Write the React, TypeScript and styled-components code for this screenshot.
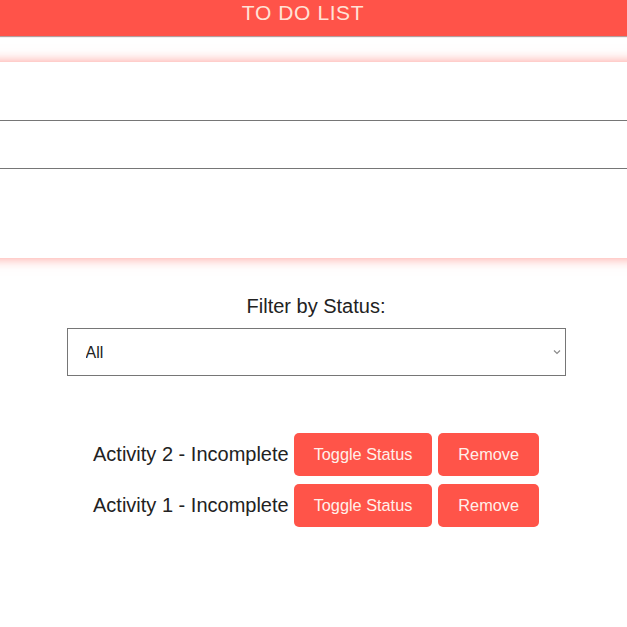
import React, { useState } from "react";
import styled, { createGlobalStyle } from "styled-components";

const GlobalStyle = createGlobalStyle`
  html, body {
    margin: 0;
    padding: 0;
    overflow-x: hidden;
    background: #ffffff;
  }
  body {
    font-family: "Liberation Sans", Arial, sans-serif;
    color: #222222;
  }
`;

const Page = styled.div`
  display: flex;
  flex-direction: column;
  width: 100%;
`;

const Header = styled.header`
  height: 36px;
  box-sizing: border-box;
  padding: 1px 21px 0 0;
  background: #ff5349;
  box-shadow: 0 1px 1px rgba(90, 40, 40, 0.45);
  text-align: center;
  position: relative;
  z-index: 1;
`;

const Title = styled.h1`
  margin: 0;
  font-size: 21px;
  line-height: 24px;
  font-weight: 400;
  color: #ffe2d6;
  letter-spacing: 0.6px;
`;

const FormCard = styled.form`
  margin: 26px -20px 0;
  height: 196px;
  box-sizing: border-box;
  padding-top: 58px;
  background: #ffffff;
  box-shadow: 0 0 12px rgba(255, 83, 73, 0.6);
`;

const TextField = styled.input`
  display: block;
  width: 100%;
  height: 49px;
  box-sizing: border-box;
  border: 1px solid #767676;
  background: #ffffff;
  font-family: "Liberation Sans", Arial, sans-serif;
  font-size: 16px;
  padding: 0 30px;
  outline: none;
`;

const Main = styled.main`
  display: flex;
  flex-direction: column;
  align-items: center;
  padding-left: 5px;
`;

const FilterLabel = styled.label`
  margin-top: 37px;
  font-size: 20px;
  line-height: 23px;
  color: #222222;
`;

const SelectWrap = styled.div`
  position: relative;
  margin-top: 10px;
  width: 499px;
`;

const Select = styled.select`
  display: block;
  width: 100%;
  height: 48px;
  box-sizing: border-box;
  appearance: none;
  -webkit-appearance: none;
  border: 1px solid #767676;
  border-radius: 0;
  background: #ffffff;
  padding: 0 18px;
  font-family: "Liberation Sans", Arial, sans-serif;
  font-size: 16px;
  color: #222222;
  outline: none;
`;

const Chevron = styled.svg`
  position: absolute;
  right: 5px;
  top: 21px;
  width: 8px;
  height: 6px;
  pointer-events: none;
`;

const List = styled.ul`
  list-style: none;
  margin: 57px 0 0;
  padding: 0;
  display: flex;
  flex-direction: column;
  align-items: center;
  gap: 8px;
`;

const Item = styled.li`
  display: flex;
  align-items: center;
  gap: 6px;
`;

const ItemText = styled.span`
  font-size: 20px;
  line-height: 23px;
  color: #222222;
  margin-right: -1px;
`;

const ActionButton = styled.button`
  height: 43px;
  padding: 0 20px;
  border: none;
  border-radius: 5px;
  background: #ff5449;
  color: #fff0ea;
  font-family: "Liberation Sans", Arial, sans-serif;
  font-size: 16.3px;
  cursor: pointer;
`;

type Todo = { id: number; name: string; done: boolean };

export default function App() {
  const [todos, setTodos] = useState<Todo[]>([
    { id: 2, name: "Activity 2", done: false },
    { id: 1, name: "Activity 1", done: false },
  ]);
  const [filter, setFilter] = useState("all");

  const visible = todos.filter((t) =>
    filter === "all" ? true : filter === "complete" ? t.done : !t.done
  );

  return (
    <Page>
      <GlobalStyle />
      <Header>
        <Title>TO DO LIST</Title>
      </Header>
      <FormCard onSubmit={(e) => e.preventDefault()}>
        <TextField type="text" aria-label="New activity" />
      </FormCard>
      <Main>
        <FilterLabel htmlFor="status-filter">Filter by Status:</FilterLabel>
        <SelectWrap>
          <Select
            id="status-filter"
            value={filter}
            onChange={(e) => setFilter(e.target.value)}
          >
            <option value="all">All</option>
            <option value="complete">Complete</option>
            <option value="incomplete">Incomplete</option>
          </Select>
          <Chevron viewBox="0 0 8 6">
            <path d="M1 1.5 L4 4.5 L7 1.5" fill="none" stroke="#8a8a8a" strokeWidth="1.2" />
          </Chevron>
        </SelectWrap>
        <List>
          {visible.map((t) => (
            <Item key={t.id}>
              <ItemText>
                {t.name} - {t.done ? "Complete" : "Incomplete"}
              </ItemText>
              <ActionButton
                type="button"
                onClick={() =>
                  setTodos((prev) =>
                    prev.map((p) => (p.id === t.id ? { ...p, done: !p.done } : p))
                  )
                }
              >
                Toggle Status
              </ActionButton>
              <ActionButton
                type="button"
                onClick={() => setTodos((prev) => prev.filter((p) => p.id !== t.id))}
              >
                Remove
              </ActionButton>
            </Item>
          ))}
        </List>
      </Main>
    </Page>
  );
}
